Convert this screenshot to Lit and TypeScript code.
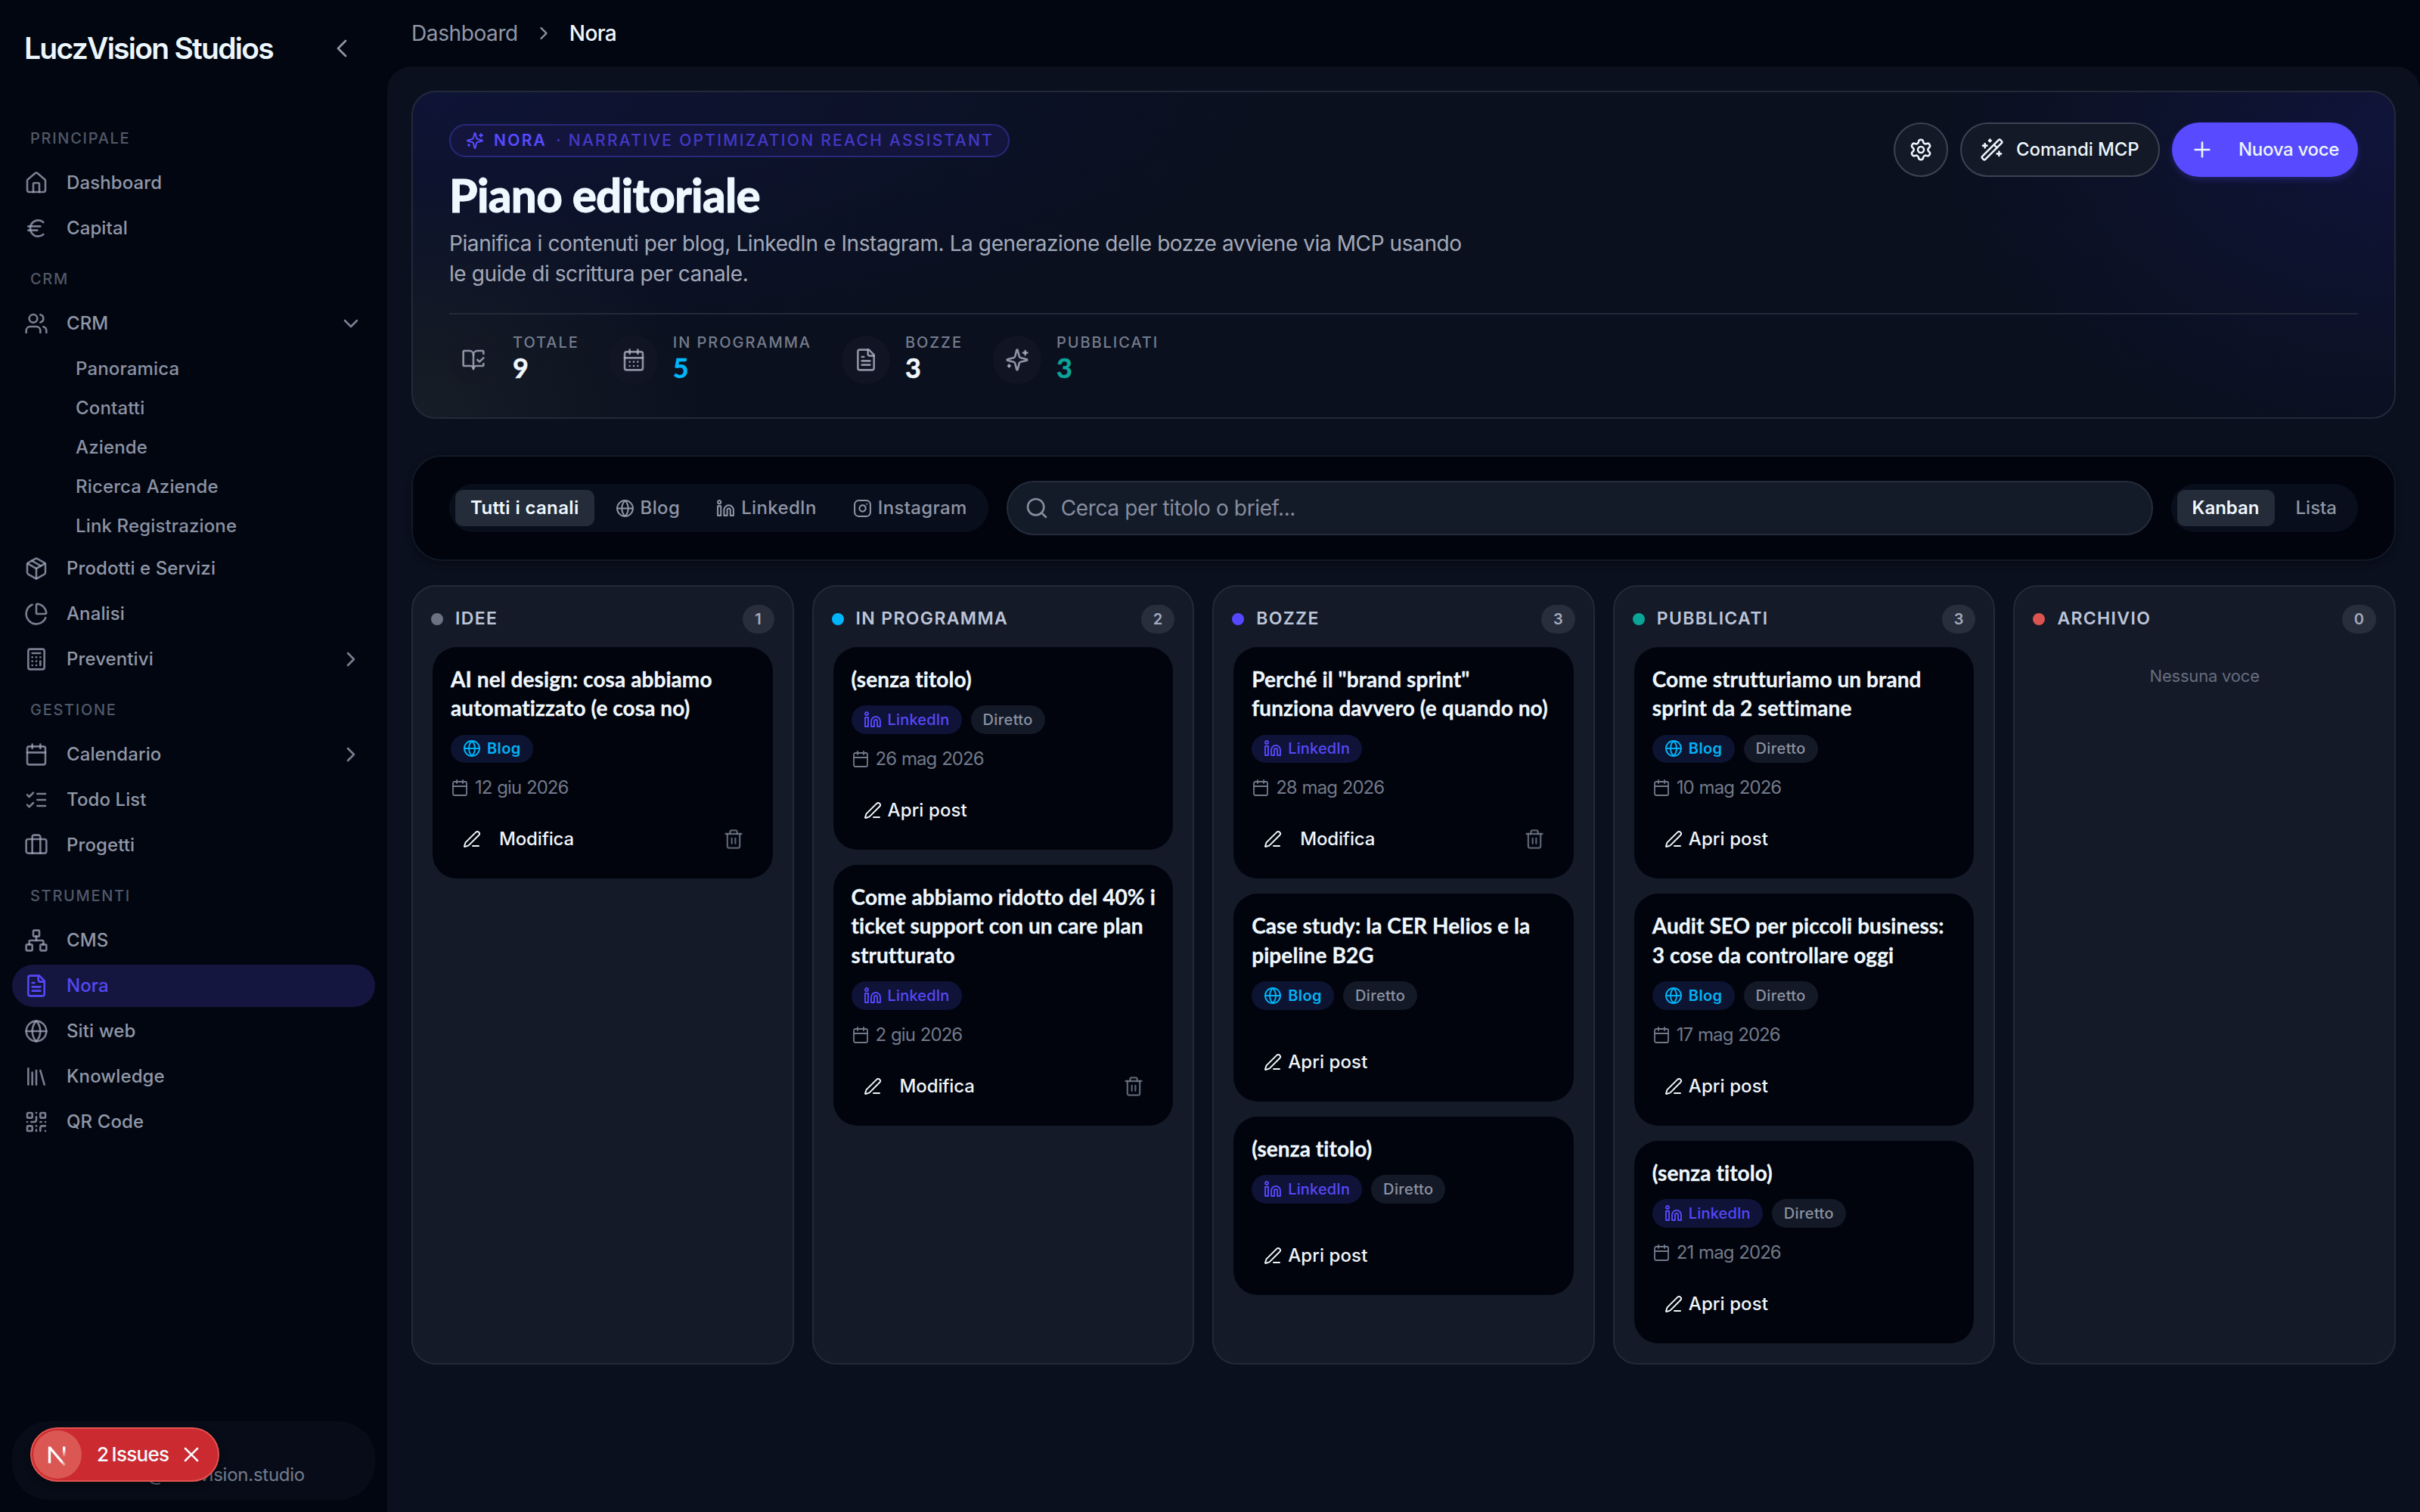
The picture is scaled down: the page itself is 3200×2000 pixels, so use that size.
import { LitElement, html, css, svg, nothing } from 'lit';
import { customElement, property, state } from 'lit/decorators.js';
import { classMap } from 'lit/directives/class-map.js';

const icons: Record<string, string[]> = {
  home: [
    'M15 21v-8a1 1 0 0 0-1-1h-4a1 1 0 0 0-1 1v8',
    'M3 10a2 2 0 0 1 .709-1.528l7-5.999a2 2 0 0 1 2.582 0l7 5.999A2 2 0 0 1 21 10v9a2 2 0 0 1-2 2H5a2 2 0 0 1-2-2z',
  ],
  euro: ['M4 10h12', 'M4 14h9', 'M19 6a7.7 7.7 0 0 0-5.2-2A7.9 7.9 0 0 0 6 12c0 4.4 3.5 8 7.8 8 2 0 3.8-.8 5.2-2'],
  users: [
    'M16 21v-2a4 4 0 0 0-4-4H6a4 4 0 0 0-4 4v2',
    'M5 7a4 4 0 1 0 8 0a4 4 0 1 0-8 0',
    'M22 21v-2a4 4 0 0 0-3-3.87',
    'M16 3.13a4 4 0 0 1 0 7.75',
  ],
  box: [
    'M11 21.73a2 2 0 0 0 2 0l7-4A2 2 0 0 0 21 16V8a2 2 0 0 0-1-1.73l-7-4a2 2 0 0 0-2 0l-7 4A2 2 0 0 0 3 8v8a2 2 0 0 0 1 1.73z',
    'M12 22V12',
    'M3.29 7 12 12l8.71-5',
    'm7.5 4.27 9 5.15',
  ],
  pie: [
    'M21 12c.552 0 1.005-.449.95-.998a10 10 0 0 0-8.953-8.951c-.55-.055-.998.398-.998.95v8a1 1 0 0 0 1 1z',
    'M21.21 15.89A10 10 0 1 1 8 2.83',
  ],
  calculator: [
    'M6 2h12a2 2 0 0 1 2 2v16a2 2 0 0 1-2 2H6a2 2 0 0 1-2-2V4a2 2 0 0 1 2-2z',
    'M8 6h8', 'M16 14v4', 'M16 10h.01', 'M12 10h.01', 'M8 10h.01', 'M12 14h.01', 'M8 14h.01', 'M12 18h.01', 'M8 18h.01',
  ],
  calendar: ['M8 2v4', 'M16 2v4', 'M5 4h14a2 2 0 0 1 2 2v14a2 2 0 0 1-2 2H5a2 2 0 0 1-2-2V6a2 2 0 0 1 2-2z', 'M3 10h18'],
  calendarDays: [
    'M8 2v4', 'M16 2v4', 'M5 4h14a2 2 0 0 1 2 2v14a2 2 0 0 1-2 2H5a2 2 0 0 1-2-2V6a2 2 0 0 1 2-2z', 'M3 10h18',
    'M8 14h.01', 'M12 14h.01', 'M16 14h.01', 'M8 18h.01', 'M12 18h.01', 'M16 18h.01',
  ],
  checks: ['m3 17 2 2 4-4', 'm3 7 2 2 4-4', 'M13 6h8', 'M13 12h8', 'M13 18h8'],
  briefcase: ['M16 20V4a2 2 0 0 0-2-2h-4a2 2 0 0 0-2 2v16', 'M4 6h16a2 2 0 0 1 2 2v10a2 2 0 0 1-2 2H4a2 2 0 0 1-2-2V8a2 2 0 0 1 2-2z'],
  network: [
    'M17 16h4a1 1 0 0 1 1 1v4a1 1 0 0 1-1 1h-4a1 1 0 0 1-1-1v-4a1 1 0 0 1 1-1z',
    'M3 16h4a1 1 0 0 1 1 1v4a1 1 0 0 1-1 1H3a1 1 0 0 1-1-1v-4a1 1 0 0 1 1-1z',
    'M10 2h4a1 1 0 0 1 1 1v4a1 1 0 0 1-1 1h-4a1 1 0 0 1-1-1V3a1 1 0 0 1 1-1z',
    'M5 16v-3a1 1 0 0 1 1-1h12a1 1 0 0 1 1 1v3',
    'M12 12V8',
  ],
  file: ['M15 2H6a2 2 0 0 0-2 2v16a2 2 0 0 0 2 2h12a2 2 0 0 0 2-2V7Z', 'M14 2v4a2 2 0 0 0 2 2h4', 'M10 9H8', 'M16 13H8', 'M16 17H8'],
  globe: ['M2 12a10 10 0 1 0 20 0a10 10 0 1 0-20 0', 'M12 2a14.5 14.5 0 0 0 0 20 14.5 14.5 0 0 0 0-20', 'M2 12h20'],
  library: ['m16 6 4 14', 'M12 6v14', 'M8 8v12', 'M4 4v16'],
  qr: [
    'M4 3h3a1 1 0 0 1 1 1v3a1 1 0 0 1-1 1H4a1 1 0 0 1-1-1V4a1 1 0 0 1 1-1z',
    'M17 3h3a1 1 0 0 1 1 1v3a1 1 0 0 1-1 1h-3a1 1 0 0 1-1-1V4a1 1 0 0 1 1-1z',
    'M4 16h3a1 1 0 0 1 1 1v3a1 1 0 0 1-1 1H4a1 1 0 0 1-1-1v-3a1 1 0 0 1 1-1z',
    'M21 16h-3a2 2 0 0 0-2 2v3', 'M21 21v.01', 'M12 7v3a2 2 0 0 1-2 2H7', 'M3 12h.01', 'M12 3h.01', 'M12 16v.01', 'M16 12h1', 'M21 12v.01', 'M12 21v-1',
  ],
  book: [
    'M12 21V7', 'm16 12 2 2 4-4',
    'M22 6V4a1 1 0 0 0-1-1h-5a4 4 0 0 0-4 4 4 4 0 0 0-4-4H3a1 1 0 0 0-1 1v13a1 1 0 0 0 1 1h6a3 3 0 0 1 3 3 3 3 0 0 1 3-3h6a1 1 0 0 0 1-1v-1.3',
  ],
  sparkles: [
    'M9.937 15.5A2 2 0 0 0 8.5 14.063l-6.135-1.582a.5.5 0 0 1 0-.962L8.5 9.936A2 2 0 0 0 9.937 8.5l1.582-6.135a.5.5 0 0 1 .963 0L14.063 8.5A2 2 0 0 0 15.5 9.937l6.135 1.581a.5.5 0 0 1 0 .964L15.5 14.063a2 2 0 0 0-1.437 1.437l-1.582 6.135a.5.5 0 0 1-.963 0z',
    'M20 3v4', 'M22 5h-4', 'M4 17v2', 'M5 18H3',
  ],
  settings: [
    'M9.671 4.136a2.34 2.34 0 0 1 4.659 0 2.34 2.34 0 0 0 3.319 1.915 2.34 2.34 0 0 1 2.33 4.033 2.34 2.34 0 0 0 0 3.831 2.34 2.34 0 0 1-2.33 4.033 2.34 2.34 0 0 0-3.319 1.915 2.34 2.34 0 0 1-4.659 0 2.34 2.34 0 0 0-3.32-1.915 2.34 2.34 0 0 1-2.33-4.033 2.34 2.34 0 0 0 0-3.831A2.34 2.34 0 0 1 6.35 6.051a2.34 2.34 0 0 0 3.319-1.915',
    'M9 12a3 3 0 1 0 6 0a3 3 0 1 0-6 0',
  ],
  wand: [
    'm21.64 3.64-1.28-1.28a1.21 1.21 0 0 0-1.72 0L2.36 18.64a1.21 1.21 0 0 0 0 1.72l1.28 1.28a1.2 1.2 0 0 0 1.72 0L21.64 5.36a1.2 1.2 0 0 0 0-1.72',
    'm14 7 3 3', 'M5 6v4', 'M19 14v4', 'M10 2v2', 'M7 8H3', 'M21 16h-4', 'M11 3H9',
  ],
  plus: ['M5 12h14', 'M12 5v14'],
  pen: [
    'M13 21h8',
    'M21.174 6.812a1 1 0 0 0-3.986-3.987L3.842 16.174a2 2 0 0 0-.5.83l-1.321 4.352a.5.5 0 0 0 .623.622l4.353-1.32a2 2 0 0 0 .83-.497z',
  ],
  trash: ['M3 6h18', 'M19 6v14a2 2 0 0 1-2 2H7a2 2 0 0 1-2-2V6', 'M8 6V4a2 2 0 0 1 2-2h4a2 2 0 0 1 2 2v2', 'M10 11v6', 'M14 11v6'],
  linkedin: [
    'M16 8a6 6 0 0 1 6 6v7h-4v-7a2 2 0 0 0-2-2 2 2 0 0 0-2 2v7h-4v-7a6 6 0 0 1 6-6z',
    'M2 9h4v12H2z', 'M2 4a2 2 0 1 0 4 0a2 2 0 1 0-4 0',
  ],
  instagram: [
    'M7 2h10a5 5 0 0 1 5 5v10a5 5 0 0 1-5 5H7a5 5 0 0 1-5-5V7a5 5 0 0 1 5-5z',
    'M16 11.37A4 4 0 1 1 12.63 8 4 4 0 0 1 16 11.37z', 'M17.5 6.5h.01',
  ],
  search: ['m21 21-4.34-4.34', 'M3 11a8 8 0 1 0 16 0a8 8 0 1 0-16 0'],
  left: ['m15 18-6-6 6-6'],
  right: ['m9 18 6-6-6-6'],
  down: ['m6 9 6 6 6-6'],
  close: ['M18 6 6 18', 'm6 6 12 12'],
};

@customElement('ui-icon')
export class UiIcon extends LitElement {
  static styles = css`
    :host {
      display: inline-flex;
      flex: none;
      width: var(--icon-size, 32px);
      height: var(--icon-size, 32px);
    }

    svg {
      width: 100%;
      height: 100%;
      fill: none;
      stroke: currentColor;
      stroke-width: var(--icon-stroke, 1.95);
      stroke-linecap: round;
      stroke-linejoin: round;
    }
  `;

  @property() name = '';

  render() {
    return html`<svg viewBox="0 0 24 24" aria-hidden="true">
      ${(icons[this.name] ?? []).map((d) => svg`<path d=${d} />`)}
    </svg>`;
  }
}

interface NavItem {
  label: string;
  icon: string;
  chevron?: string;
  active?: boolean;
  children?: string[];
}

const nav: { title: string; items: NavItem[] }[] = [
  {
    title: 'Principale',
    items: [
      { label: 'Dashboard', icon: 'home' },
      { label: 'Capital', icon: 'euro' },
    ],
  },
  {
    title: 'CRM',
    items: [
      {
        label: 'CRM',
        icon: 'users',
        chevron: 'down',
        children: ['Panoramica', 'Contatti', 'Aziende', 'Ricerca Aziende', 'Link Registrazione'],
      },
      { label: 'Prodotti e Servizi', icon: 'box' },
      { label: 'Analisi', icon: 'pie' },
      { label: 'Preventivi', icon: 'calculator', chevron: 'right' },
    ],
  },
  {
    title: 'Gestione',
    items: [
      { label: 'Calendario', icon: 'calendar', chevron: 'right' },
      { label: 'Todo List', icon: 'checks' },
      { label: 'Progetti', icon: 'briefcase' },
    ],
  },
  {
    title: 'Strumenti',
    items: [
      { label: 'CMS', icon: 'network' },
      { label: 'Nora', icon: 'file', active: true },
      { label: 'Siti web', icon: 'globe' },
      { label: 'Knowledge', icon: 'library' },
      { label: 'QR Code', icon: 'qr' },
    ],
  },
];

@customElement('side-nav')
export class SideNav extends LitElement {
  static styles = css`
    :host {
      display: flex;
      flex-direction: column;
      width: 512px;
      flex: none;
    }

    header {
      display: flex;
      align-items: center;
      justify-content: space-between;
      height: 128px;
      padding: 0 40px 0 32px;
      color: #9097a8;
      --icon-size: 40px;
      --icon-stroke: 1.6;
    }

    h1 {
      margin: 0;
      font-size: 39px;
      font-weight: 600;
      letter-spacing: -1.75px;
      color: #ecf6fc;
    }

    nav {
      flex: 1;
      padding: 16px 16px 0;
    }

    h2 {
      display: flex;
      align-items: center;
      height: 62px;
      margin: 0;
      padding: 8px 24px 0;
      font-size: 20px;
      font-weight: 500;
      letter-spacing: 1.7px;
      text-transform: uppercase;
      color: #515868;
    }

    .items,
    .sub {
      display: flex;
      flex-direction: column;
      gap: 4px;
    }

    .item {
      display: flex;
      align-items: center;
      gap: 24px;
      height: 56px;
      padding: 0 16px;
      border-radius: 28px;
      font-weight: 500;
      letter-spacing: 0.1px;
      color: #9097a8;
    }

    .item ui-icon {
      color: rgba(160, 168, 188, 0.75);
    }

    .item .label {
      flex: 1;
    }

    .item.active,
    .item.active ui-icon {
      color: #5448f6;
    }

    .item.active {
      background: #15163f;
    }

    .sub {
      padding-top: 4px;
    }

    .sub a {
      display: flex;
      align-items: center;
      height: 48px;
      padding-left: 84px;
      font-weight: 500;
      letter-spacing: 0.15px;
      color: #8b92a4;
    }

    .user {
      display: flex;
      justify-content: flex-end;
      align-items: flex-end;
      height: 104px;
      box-sizing: border-box;
      margin: 0 16px 16px;
      padding: 0 93px 18px 0;
      border-radius: 48px;
      background: #070c18;
      letter-spacing: -0.25px;
      color: #747b8c;
    }
  `;

  render() {
    return html`
      <header>
        <h1>LuczVision Studios</h1>
        <ui-icon name="left"></ui-icon>
      </header>
      <nav>
        ${nav.map(
          (group) => html`
            <h2>${group.title}</h2>
            <div class="items">${group.items.map((item) => this.renderItem(item))}</div>
          `
        )}
      </nav>
      <div class="user">info@luczvision.studio</div>
    `;
  }

  renderItem(item: NavItem) {
    return html`
      <a class=${classMap({ item: true, active: !!item.active })}>
        <ui-icon name=${item.icon}></ui-icon>
        <span class="label">${item.label}</span>
        ${item.chevron ? html`<ui-icon name=${item.chevron}></ui-icon>` : nothing}
      </a>
      ${item.children
        ? html`<div class="sub">${item.children.map((c) => html`<a>${c}</a>`)}</div>`
        : nothing}
    `;
  }
}

const stats = [
  { label: 'Totale', value: 9, icon: 'book', tone: '' },
  { label: 'In programma', value: 5, icon: 'calendarDays', tone: 'cyan' },
  { label: 'Bozze', value: 3, icon: 'file', tone: '' },
  { label: 'Pubblicati', value: 3, icon: 'sparkles', tone: 'teal' },
];

@customElement('plan-hero')
export class PlanHero extends LitElement {
  static styles = css`
    :host {
      display: block;
      box-sizing: border-box;
      height: 434px;
      padding: 40px 48px;
      border: 2px solid #222939;
      border-radius: 32px;
      background:
        radial-gradient(ellipse 520px 420px at 0% 100%, rgba(30, 37, 44, 0.65), transparent 75%),
        radial-gradient(ellipse 1500px 460px at 0% 0%, rgba(32, 36, 150, 0.2), transparent 75%),
        radial-gradient(ellipse 800px 560px at 100% 12%, rgba(34, 34, 150, 0.24), transparent 75%),
        #0a101e;
    }

    .top {
      display: flex;
      justify-content: space-between;
      align-items: flex-start;
      box-sizing: border-box;
      height: 254px;
      border-bottom: 2px solid #232938;
    }

    .badge {
      display: inline-flex;
      align-items: center;
      height: 44px;
      box-sizing: border-box;
      margin-top: 2px;
      padding: 0 19px 0 20px;
      border: 2px solid #28297a;
      border-radius: 22px;
      background: #14153c;
      font-size: 21px;
      font-weight: 500;
      letter-spacing: 2.28px;
      text-transform: uppercase;
      color: #4339c8;
      white-space: pre;
      --icon-size: 24px;
      --icon-stroke: 2;
    }

    .badge ui-icon,
    .badge b {
      color: #574bff;
    }

    .badge b {
      padding: 0 12px 0 13px;
      font-weight: 600;
    }

    h1 {
      margin: 17px 0 11px;
      font: 900 60px/66px Lato, sans-serif;
      letter-spacing: -0.7px;
      color: #edf8ff;
      -webkit-text-stroke: 0.8px #edf8ff;
    }

    p {
      width: 1344px;
      margin: 0;
      font-size: 28px;
      line-height: 40px;
      letter-spacing: -0.41px;
      color: #a3a9b9;
    }

    .actions {
      display: flex;
      gap: 16px;
    }

    button {
      display: flex;
      align-items: center;
      box-sizing: border-box;
      height: 72px;
      border: 2px solid #3d4352;
      border-radius: 36px;
      background: #131926;
      font: inherit;
      font-weight: 500;
      letter-spacing: -0.1px;
      color: #ecf5fc;
    }

    .gear {
      width: 72px;
      padding: 0 18px;
    }

    .mcp {
      gap: 16px;
      width: 264px;
      padding: 0 24px;
    }

    .new {
      gap: 32px;
      width: 246px;
      padding: 0 24px;
      border: 0;
      background: #574aff;
      letter-spacing: -0.3px;
      box-shadow: 0 4px 8px rgba(87, 74, 255, 0.25);
    }

    .stats {
      display: flex;
      gap: 40px;
      padding-top: 24px;
    }

    .stat {
      display: flex;
      gap: 20px;
      height: 72px;
    }

    .disc {
      display: grid;
      place-items: center;
      width: 64px;
      height: 64px;
      margin-top: 4px;
      border-radius: 50%;
      background: rgba(20, 24, 38, 0.6);
      color: rgba(172, 179, 196, 0.8);
    }

    .label {
      font-size: 20px;
      line-height: 26px;
      font-weight: 500;
      letter-spacing: 1.95px;
      text-transform: uppercase;
      color: #757c8c;
    }

    .value {
      font: 700 36px/40px Lato, sans-serif;
      color: #f1f7fd;
      -webkit-text-stroke: 0.5px currentColor;
    }

    .value.cyan {
      color: #00b6fa;
    }

    .value.teal {
      color: #0aa599;
    }
  `;

  render() {
    return html`
      <div class="top">
        <div>
          <div class="badge"><ui-icon name="sparkles"></ui-icon><b>Nora</b><span>· Narrative Optimization Reach Assistant</span></div>
          <h1>Piano editoriale</h1>
          <p>
            Pianifica i contenuti per blog, LinkedIn e Instagram. La generazione delle bozze avviene via MCP usando<br />
            le guide di scrittura per canale.
          </p>
        </div>
        <div class="actions">
          <button class="gear" aria-label="Impostazioni"><ui-icon name="settings"></ui-icon></button>
          <button class="mcp"><ui-icon name="wand"></ui-icon>Comandi MCP</button>
          <button class="new"><ui-icon name="plus"></ui-icon>Nuova voce</button>
        </div>
      </div>
      <div class="stats">
        ${stats.map(
          (s) => html`
            <div class="stat">
              <div class="disc"><ui-icon name=${s.icon}></ui-icon></div>
              <div>
                <div class="label">${s.label}</div>
                <div class="value ${s.tone}">${s.value}</div>
              </div>
            </div>
          `
        )}
      </div>
    `;
  }
}

@customElement('plan-toolbar')
export class PlanToolbar extends LitElement {
  static styles = css`
    :host {
      display: flex;
      align-items: center;
      gap: 24px;
      box-sizing: border-box;
      height: 140px;
      padding: 0 48px;
      border: 2px solid #121927;
      border-radius: 40px;
      background: #01040d;
      box-shadow: 0 4px 8px rgba(0, 2, 8, 0.35);
    }

    .group {
      display: flex;
      gap: 8px;
      padding: 8px;
      border-radius: 32px;
      background: #080e1b;
      letter-spacing: 0.35px;
    }

    .group.views {
      letter-spacing: 0;
    }

    .tab {
      display: flex;
      align-items: center;
      gap: 8px;
      height: 48px;
      padding: 0 20px;
      border-radius: 10px;
      font-weight: 500;
      color: #8e95a5;
      --icon-size: 25px;
    }

    .tab.on {
      background: #242b39;
      color: #eef7fd;
      font-weight: 600;
    }

    .search {
      flex: 1;
      display: flex;
      align-items: center;
      gap: 16px;
      box-sizing: border-box;
      height: 72px;
      padding: 0 22px;
      border: 2px solid #252c3b;
      border-radius: 36px;
      background: #131a28;
      font-size: 28px;
      letter-spacing: -0.38px;
      color: #868d9e;
    }
  `;

  @state() channel = 'Tutti i canali';
  @state() view = 'Kanban';

  channels = [
    { label: 'Tutti i canali', icon: '' },
    { label: 'Blog', icon: 'globe' },
    { label: 'LinkedIn', icon: 'linkedin' },
    { label: 'Instagram', icon: 'instagram' },
  ];

  render() {
    return html`
      <div class="group">
        ${this.channels.map(
          (c) => html`
            <div class=${classMap({ tab: true, on: c.label === this.channel })} @click=${() => (this.channel = c.label)}>
              ${c.icon ? html`<ui-icon name=${c.icon}></ui-icon>` : nothing}${c.label}
            </div>
          `
        )}
      </div>
      <div class="search"><ui-icon name="search"></ui-icon>Cerca per titolo o brief...</div>
      <div class="group views">
        ${['Kanban', 'Lista'].map(
          (v) => html`
            <div class=${classMap({ tab: true, on: v === this.view })} @click=${() => (this.view = v)}>${v}</div>
          `
        )}
      </div>
    `;
  }
}

interface Post {
  title: string[];
  channel: 'Blog' | 'LinkedIn';
  direct?: boolean;
  date?: string;
  draft?: boolean;
}

const columns: { title: string; tone: string; posts: Post[] }[] = [
  {
    title: 'Idee',
    tone: 'gray',
    posts: [
      { title: ['AI nel design: cosa abbiamo', 'automatizzato (e cosa no)'], channel: 'Blog', date: '12 giu 2026', draft: true },
    ],
  },
  {
    title: 'In programma',
    tone: 'cyan',
    posts: [
      { title: ['(senza titolo)'], channel: 'LinkedIn', direct: true, date: '26 mag 2026' },
      {
        title: ['Come abbiamo ridotto del 40% i', 'ticket support con un care plan', 'strutturato'],
        channel: 'LinkedIn',
        date: '2 giu 2026',
        draft: true,
      },
    ],
  },
  {
    title: 'Bozze',
    tone: 'indigo',
    posts: [
      { title: ['Perché il "brand sprint"', 'funziona davvero (e quando no)'], channel: 'LinkedIn', date: '28 mag 2026', draft: true },
      { title: ['Case study: la CER Helios e la', 'pipeline B2G'], channel: 'Blog', direct: true },
      { title: ['(senza titolo)'], channel: 'LinkedIn', direct: true },
    ],
  },
  {
    title: 'Pubblicati',
    tone: 'teal',
    posts: [
      { title: ['Come strutturiamo un brand', 'sprint da 2 settimane'], channel: 'Blog', direct: true, date: '10 mag 2026' },
      { title: ['Audit SEO per piccoli business:', '3 cose da controllare oggi'], channel: 'Blog', direct: true, date: '17 mag 2026' },
      { title: ['(senza titolo)'], channel: 'LinkedIn', direct: true, date: '21 mag 2026' },
    ],
  },
  { title: 'Archivio', tone: 'red', posts: [] },
];

@customElement('post-card')
export class PostCard extends LitElement {
  static styles = css`
    :host {
      display: flex;
      flex-direction: column;
      gap: 16px;
      padding: 23px 24px 24px;
      border-radius: 32px;
      background: #01040d;
    }

    h4 {
      margin: 0;
      font: 700 28px/38.5px Lato, sans-serif;
      letter-spacing: 0.08px;
      white-space: nowrap;
      color: #eef7fe;
      -webkit-text-stroke: 0.3px #eef7fe;
    }

    .pills {
      display: flex;
      gap: 12px;
    }

    .pill {
      display: flex;
      align-items: center;
      gap: 8px;
      height: 37.5px;
      padding: 0 16px;
      border-radius: 19px;
      background: #131926;
      font-size: 20px;
      font-weight: 500;
      letter-spacing: 0.4px;
      color: #8b92a2;
      --icon-size: 24px;
    }

    .pill.blog {
      background: #0d1431;
      color: #00b3f6;
      font-weight: 600;
    }

    .pill.linkedin {
      background: #0f1338;
      color: #5648f8;
      letter-spacing: 0.15px;
    }

    .meta {
      display: flex;
      align-items: center;
      gap: 8px;
      height: 32px;
      margin-top: 1px;
      letter-spacing: -0.95px;
      word-spacing: 1px;
      color: #727989;
      --icon-size: 24px;
      --icon-stroke: 1.8;
    }

    .meta.empty {
      height: 0;
    }

    .foot {
      display: flex;
      justify-content: space-between;
      margin-top: 8px;
    }

    .edit {
      display: flex;
      align-items: center;
      gap: 8px;
      height: 56px;
      padding: 0 16px;
      font-weight: 500;
      letter-spacing: 0.1px;
      color: #f0f5fa;
      --icon-size: 24px;
    }

    .edit.draft {
      gap: 24px;
      letter-spacing: -0.15px;
    }

    .remove {
      display: grid;
      place-items: center;
      width: 56px;
      color: rgba(120, 128, 146, 0.75);
      --icon-size: 28px;
    }
  `;

  @property({ attribute: false }) post!: Post;

  render() {
    const { title, channel, direct, date, draft } = this.post;
    return html`
      <h4>${title.map((line, i) => html`${i ? html`<br />` : nothing}${line}`)}</h4>
      <div class="pills">
        <span class="pill ${channel.toLowerCase()}">
          <ui-icon name=${channel === 'Blog' ? 'globe' : 'linkedin'}></ui-icon>${channel}
        </span>
        ${direct ? html`<span class="pill">Diretto</span>` : nothing}
      </div>
      <div class=${classMap({ meta: true, empty: !date })}>
        ${date ? html`<ui-icon name="calendar"></ui-icon>${date}` : nothing}
      </div>
      <div class="foot">
        <span class=${classMap({ edit: true, draft: !!draft })}>
          <ui-icon name="pen"></ui-icon>${draft ? 'Modifica' : 'Apri post'}
        </span>
        ${draft ? html`<span class="remove"><ui-icon name="trash"></ui-icon></span>` : nothing}
      </div>
    `;
  }
}

@customElement('plan-board')
export class PlanBoard extends LitElement {
  static styles = css`
    :host {
      display: grid;
      grid-template-columns: repeat(5, minmax(0, 1fr));
      gap: 24px;
    }

    section {
      box-sizing: border-box;
      min-height: 1031px;
      padding: 0 24px 26px;
      border: 2px solid #222938;
      border-radius: 32px;
      background: #141a28;
    }

    header {
      display: flex;
      align-items: center;
      gap: 16px;
      height: 79.5px;
      box-sizing: border-box;
      padding-top: 6px;
    }

    .dot {
      width: 16px;
      height: 16px;
      border-radius: 50%;
    }

    .gray { background: #6b7282; }
    .cyan { background: #00b5fa; }
    .indigo { background: #5548ff; }
    .teal { background: #08a598; }
    .red { background: #dc5450; }

    h3 {
      flex: 1;
      margin: 0;
      font-size: 23px;
      font-weight: 600;
      letter-spacing: 1.35px;
      text-transform: uppercase;
      color: #bcc5d8;
    }

    .count {
      min-width: 42px;
      height: 38px;
      box-sizing: border-box;
      padding: 0 16px;
      border-radius: 19px;
      background: #282e3c;
      font-size: 20px;
      line-height: 38px;
      font-weight: 600;
      text-align: center;
      color: #a3abbd;
    }

    .cards {
      display: flex;
      flex-direction: column;
      gap: 20px;
      padding: 0 2px;
    }

    .none {
      padding-top: 22px;
      font-size: 22px;
      line-height: 32px;
      letter-spacing: -0.2px;
      text-align: center;
      color: #666d7e;
    }
  `;

  render() {
    return columns.map(
      (col) => html`
        <section>
          <header>
            <span class="dot ${col.tone}"></span>
            <h3>${col.title}</h3>
            <span class="count">${col.posts.length}</span>
          </header>
          <div class="cards">
            ${col.posts.length
              ? col.posts.map((p) => html`<post-card .post=${p}></post-card>`)
              : html`<div class="none">Nessuna voce</div>`}
          </div>
        </section>
      `
    );
  }
}

@customElement('dev-issues')
export class DevIssues extends LitElement {
  static styles = css`
    :host {
      position: absolute;
      left: 40px;
      bottom: 40px;
      display: flex;
      align-items: center;
      box-sizing: border-box;
      width: 250px;
      height: 72px;
      padding: 0 2px;
      border: 2px solid #e2544f;
      border-radius: 36px;
      background: #ca2a30;
      box-shadow: 0 4px 10px rgba(0, 0, 0, 0.4);
      font-size: 26px;
      font-weight: 500;
      letter-spacing: -0.7px;
      color: #f6fbff;
    }

    .logo {
      width: 64px;
      height: 64px;
      border-radius: 50%;
      background: #da5753;
    }

    .logo svg {
      display: block;
      width: 64px;
      height: 64px;
    }

    .text {
      padding-left: 20px;
      word-spacing: -2px;
    }

    ui-icon {
      margin-left: 14px;
      --icon-size: 32px;
    }
  `;

  render() {
    return html`
      <div class="logo">
        <svg viewBox="0 0 64 64" fill="none" stroke-width="3.4">
          <defs>
            <linearGradient id="fade-v" x1="0" y1="0" x2="0" y2="1">
              <stop offset="0.3" stop-color="#fff" />
              <stop offset="1" stop-color="#fff" stop-opacity="0" />
            </linearGradient>
            <linearGradient id="fade-d" x1="0" y1="0" x2="1" y2="1">
              <stop offset="0.75" stop-color="#fff" />
              <stop offset="1" stop-color="#fff" stop-opacity="0.2" />
            </linearGradient>
          </defs>
          <path d="M21.500 43.500V21.500" stroke="#fff" />
          <path d="M21.500 22.500 42 46.500" stroke="url(#fade-d)" />
          <rect x="39" y="21.500" width="3.400" height="14" fill="url(#fade-v)" />
        </svg>
      </div>
      <span class="text">2 Issues</span>
      <ui-icon name="close"></ui-icon>
    `;
  }
}

@customElement('app-root')
export class AppRoot extends LitElement {
  static styles = css`
    :host {
      position: relative;
      display: flex;
      width: 3200px;
      height: 2000px;
      overflow: hidden;
      background: #020610;
      font: 24px/1.3 Inter, 'Liberation Sans', sans-serif;
      color: #9097a8;
    }

    .page {
      flex: 1;
      display: flex;
      flex-direction: column;
      min-width: 0;
    }

    .crumbs {
      display: flex;
      align-items: center;
      gap: 20px;
      height: 88px;
      padding-left: 32px;
      font-size: 28px;
      letter-spacing: -0.4px;
      --icon-size: 28px;
    }

    .crumbs b {
      font-weight: 500;
      letter-spacing: -0.6px;
      color: #eef6fc;
    }

    main {
      flex: 1;
      padding: 32px 32px 0;
      border-radius: 32px 32px 0 0;
      background: #0a101e;
    }

    plan-toolbar {
      margin: 48px 0 32px;
    }
  `;

  render() {
    return html`
      <side-nav></side-nav>
      <div class="page">
        <div class="crumbs">
          <span>Dashboard</span>
          <ui-icon name="right"></ui-icon>
          <b>Nora</b>
        </div>
        <main>
          <plan-hero></plan-hero>
          <plan-toolbar></plan-toolbar>
          <plan-board></plan-board>
        </main>
      </div>
      <dev-issues></dev-issues>
    `;
  }
}
